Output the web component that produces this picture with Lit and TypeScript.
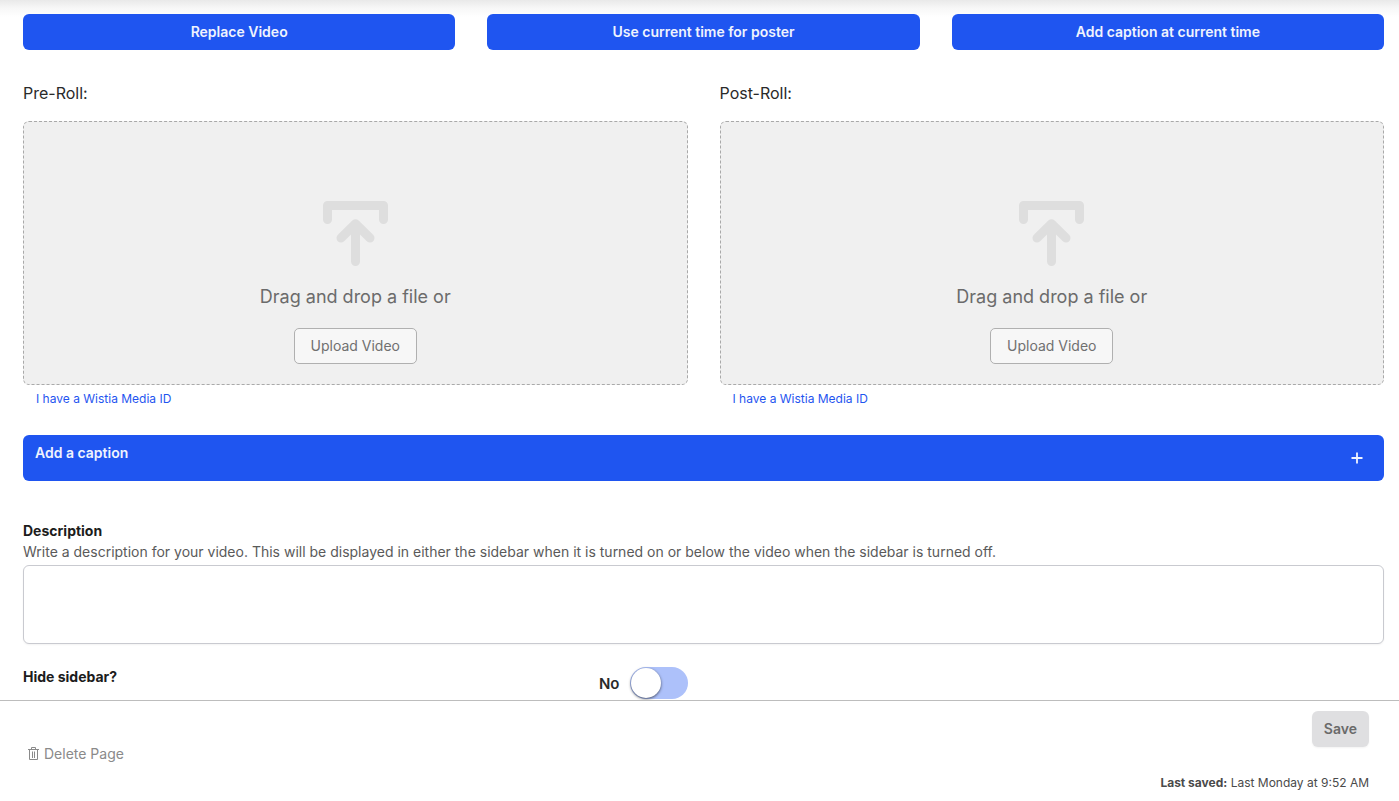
import { LitElement, html, css, svg } from "lit";
import { customElement, property, state } from "lit/decorators.js";

const uploadIcon = svg`
  <svg class="icon" width="65" height="66" viewBox="0 0 65 66" fill="none" stroke="#dedede"
    stroke-width="9" stroke-linecap="round" stroke-linejoin="round" aria-hidden="true">
    <path d="M4.5 18.5V4.5H60.5V18.5" />
    <path d="M32.5 60.5V23M18 37L32.5 22.8L47 37" />
  </svg>`;

const trashIcon = svg`
  <svg width="11" height="14" viewBox="0 0 11 14" fill="none" stroke="currentColor" aria-hidden="true">
    <path d="M0 2.5H11M3.5 2.5V0.5H7.5V2.5M1.5 2.5V12.5H9.5V2.5M4.5 4.5V11M6.5 4.5V11" />
  </svg>`;

@customElement("video-drop")
class VideoDrop extends LitElement {
  @property() heading = "";

  static styles = css`
    :host {
      display: block;
      min-width: 0;
    }
    .heading {
      margin: 0 0 16px;
      font-size: 16px;
      font-weight: 400;
      line-height: 24px;
      color: #2a2a2a;
    }
    .zone {
      display: flex;
      flex-direction: column;
      align-items: center;
      padding: 79px 16px 20px;
      border: 1px dashed #a9a9a9;
      border-radius: 6px;
      background: #f0f0f0;
    }
    .icon {
      display: block;
    }
    .hint {
      margin: 16px 0 17px;
      font-size: 18px;
      line-height: 28px;
      color: #6b6b6b;
    }
    .upload {
      height: 36px;
      padding: 0 16px;
      border: 1px solid #b0b0b0;
      border-radius: 5px;
      background: #f7f7f7;
      font: 400 14px/20px Inter, sans-serif;
      color: #707070;
    }
    .media {
      display: inline-block;
      margin: 4px 13px 0;
      font-size: 12px;
      line-height: 20px;
      color: #1f55f0;
      text-decoration: none;
    }
  `;

  render() {
    return html`
      <h2 class="heading">${this.heading}</h2>
      <div class="zone">
        ${uploadIcon}
        <p class="hint">Drag and drop a file or</p>
        <button class="upload" type="button">Upload Video</button>
      </div>
      <a class="media" href="#">I have a Wistia Media ID</a>
    `;
  }
}

@customElement("app-root")
class AppRoot extends LitElement {
  @state() private hidden_ = false;

  static styles = css`
    :host {
      display: flex;
      flex-direction: column;
      height: 100vh;
      overflow: hidden;
      background: #fff;
      font-family: Inter, sans-serif;
      color: #1c1c1c;
    }
    * {
      box-sizing: border-box;
    }
    .content {
      flex: 1;
      min-height: 0;
      overflow: hidden;
      padding: 14px 15px 0 23px;
      background: linear-gradient(#e9e9e9, #f7f7f7 8px, #fff 17px);
    }
    .actions {
      display: grid;
      grid-template-columns: repeat(3, 1fr);
      gap: 32px;
    }
    .primary {
      height: 36px;
      border: 0;
      border-radius: 6px;
      background: #1f55f0;
      font: 600 14px/20px Inter, sans-serif;
      color: #eff3fe;
    }
    .halves {
      display: grid;
      grid-template-columns: repeat(2, 1fr);
      gap: 32px;
    }
    .rolls {
      margin-top: 31px;
    }
    .caption {
      display: flex;
      justify-content: space-between;
      width: 100%;
      height: 46px;
      margin: 26px 0 40px;
      padding: 8px 21px 8px 12px;
      border: 0;
      border-radius: 6px;
      background: #1f55f0;
      font: 600 14px/20px Inter, sans-serif;
      color: #eff3fe;
    }
    .plus {
      align-self: center;
    }
    .label {
      display: block;
      font-size: 14px;
      font-weight: 700;
      line-height: 20px;
    }
    .help {
      margin: 1px 0 3px;
      font-size: 14px;
      line-height: 20px;
      color: #5a5a5a;
    }
    .description {
      display: block;
      width: 100%;
      height: 79px;
      padding: 8px 12px;
      border: 1px solid #c9cad0;
      border-radius: 6px;
      background: #fff;
      box-shadow: 0 1px 2px rgba(0, 0, 0, 0.05);
      font: 14px/20px Inter, sans-serif;
      resize: none;
    }
    .setting {
      margin-top: 23px;
    }
    .row {
      display: flex;
      justify-content: space-between;
    }
    .toggle {
      display: flex;
      align-items: center;
      gap: 10px;
      font-size: 15px;
      font-weight: 600;
      color: #2a2a2a;
    }
    .switch {
      appearance: none;
      display: flex;
      width: 58px;
      height: 32px;
      margin: 0;
      padding: 1px;
      border-radius: 16px;
      background: #adc1fa;
    }
    .switch::before {
      content: "";
      width: 30px;
      height: 30px;
      border-radius: 50%;
      background: #fff;
      box-shadow: 0 1px 3px rgba(0, 0, 0, 0.6);
    }
    .switch:checked {
      justify-content: flex-end;
      background: #1f55f0;
    }
    .footer {
      display: flex;
      justify-content: space-between;
      align-items: flex-end;
      padding: 10px 30px 8px 28px;
      border-top: 1px solid #bdbdbd;
      background: #fff;
    }
    .delete {
      display: flex;
      align-items: center;
      gap: 5px;
      margin-bottom: 29px;
      padding: 0;
      border: 0;
      background: none;
      font: 14px/20px Inter, sans-serif;
      color: #8a8a8a;
    }
    .saving {
      display: flex;
      flex-direction: column;
      align-items: flex-end;
      gap: 26px;
    }
    .save {
      height: 36px;
      padding: 0 12px;
      border: 0;
      border-radius: 6px;
      background: #dfdfe1;
      box-shadow: 0 1px 2px rgba(0, 0, 0, 0.05);
      font: 600 14px/20px Inter, sans-serif;
      color: #6a6a6a;
    }
    .saved {
      margin: 0;
      font-size: 12px;
      line-height: 20px;
      color: #4a4a4a;
    }
  `;

  private toggle(e: Event) {
    this.hidden_ = (e.target as HTMLInputElement).checked;
  }

  render() {
    return html`
      <main class="content">
        <div class="actions">
          <button class="primary" type="button">Replace Video</button>
          <button class="primary" type="button">Use current time for poster</button>
          <button class="primary" type="button">Add caption at current time</button>
        </div>
        <div class="halves rolls">
          <video-drop heading="Pre-Roll:"></video-drop>
          <video-drop heading="Post-Roll:"></video-drop>
        </div>
        <button class="caption" type="button">
          <span>Add a caption</span>
          <svg class="plus" width="12" height="12" viewBox="0 0 12 12" stroke="#eff3fe" stroke-width="1.8" aria-hidden="true">
            <path d="M6 0.5V11.5M0.5 6H11.5" />
          </svg>
        </button>
        <label class="label" for="description">Description</label>
        <p class="help" id="help">
          Write a description for your video. This will be displayed in either the sidebar when it is turned on or below the video when the sidebar is turned off.
        </p>
        <textarea class="description" id="description" aria-describedby="help"></textarea>
        <div class="halves setting">
          <div class="row">
            <label class="label" for="hide">Hide sidebar?</label>
            <div class="toggle">
              <span>${this.hidden_ ? "Yes" : "No"}</span>
              <input class="switch" id="hide" type="checkbox" role="switch" .checked=${this.hidden_} @change=${this.toggle} />
            </div>
          </div>
        </div>
      </main>
      <footer class="footer">
        <button class="delete" type="button">${trashIcon}<span>Delete Page</span></button>
        <div class="saving">
          <button class="save" type="button">Save</button>
          <p class="saved"><b>Last saved:</b> Last Monday at 9:52 AM</p>
        </div>
      </footer>
    `;
  }
}
